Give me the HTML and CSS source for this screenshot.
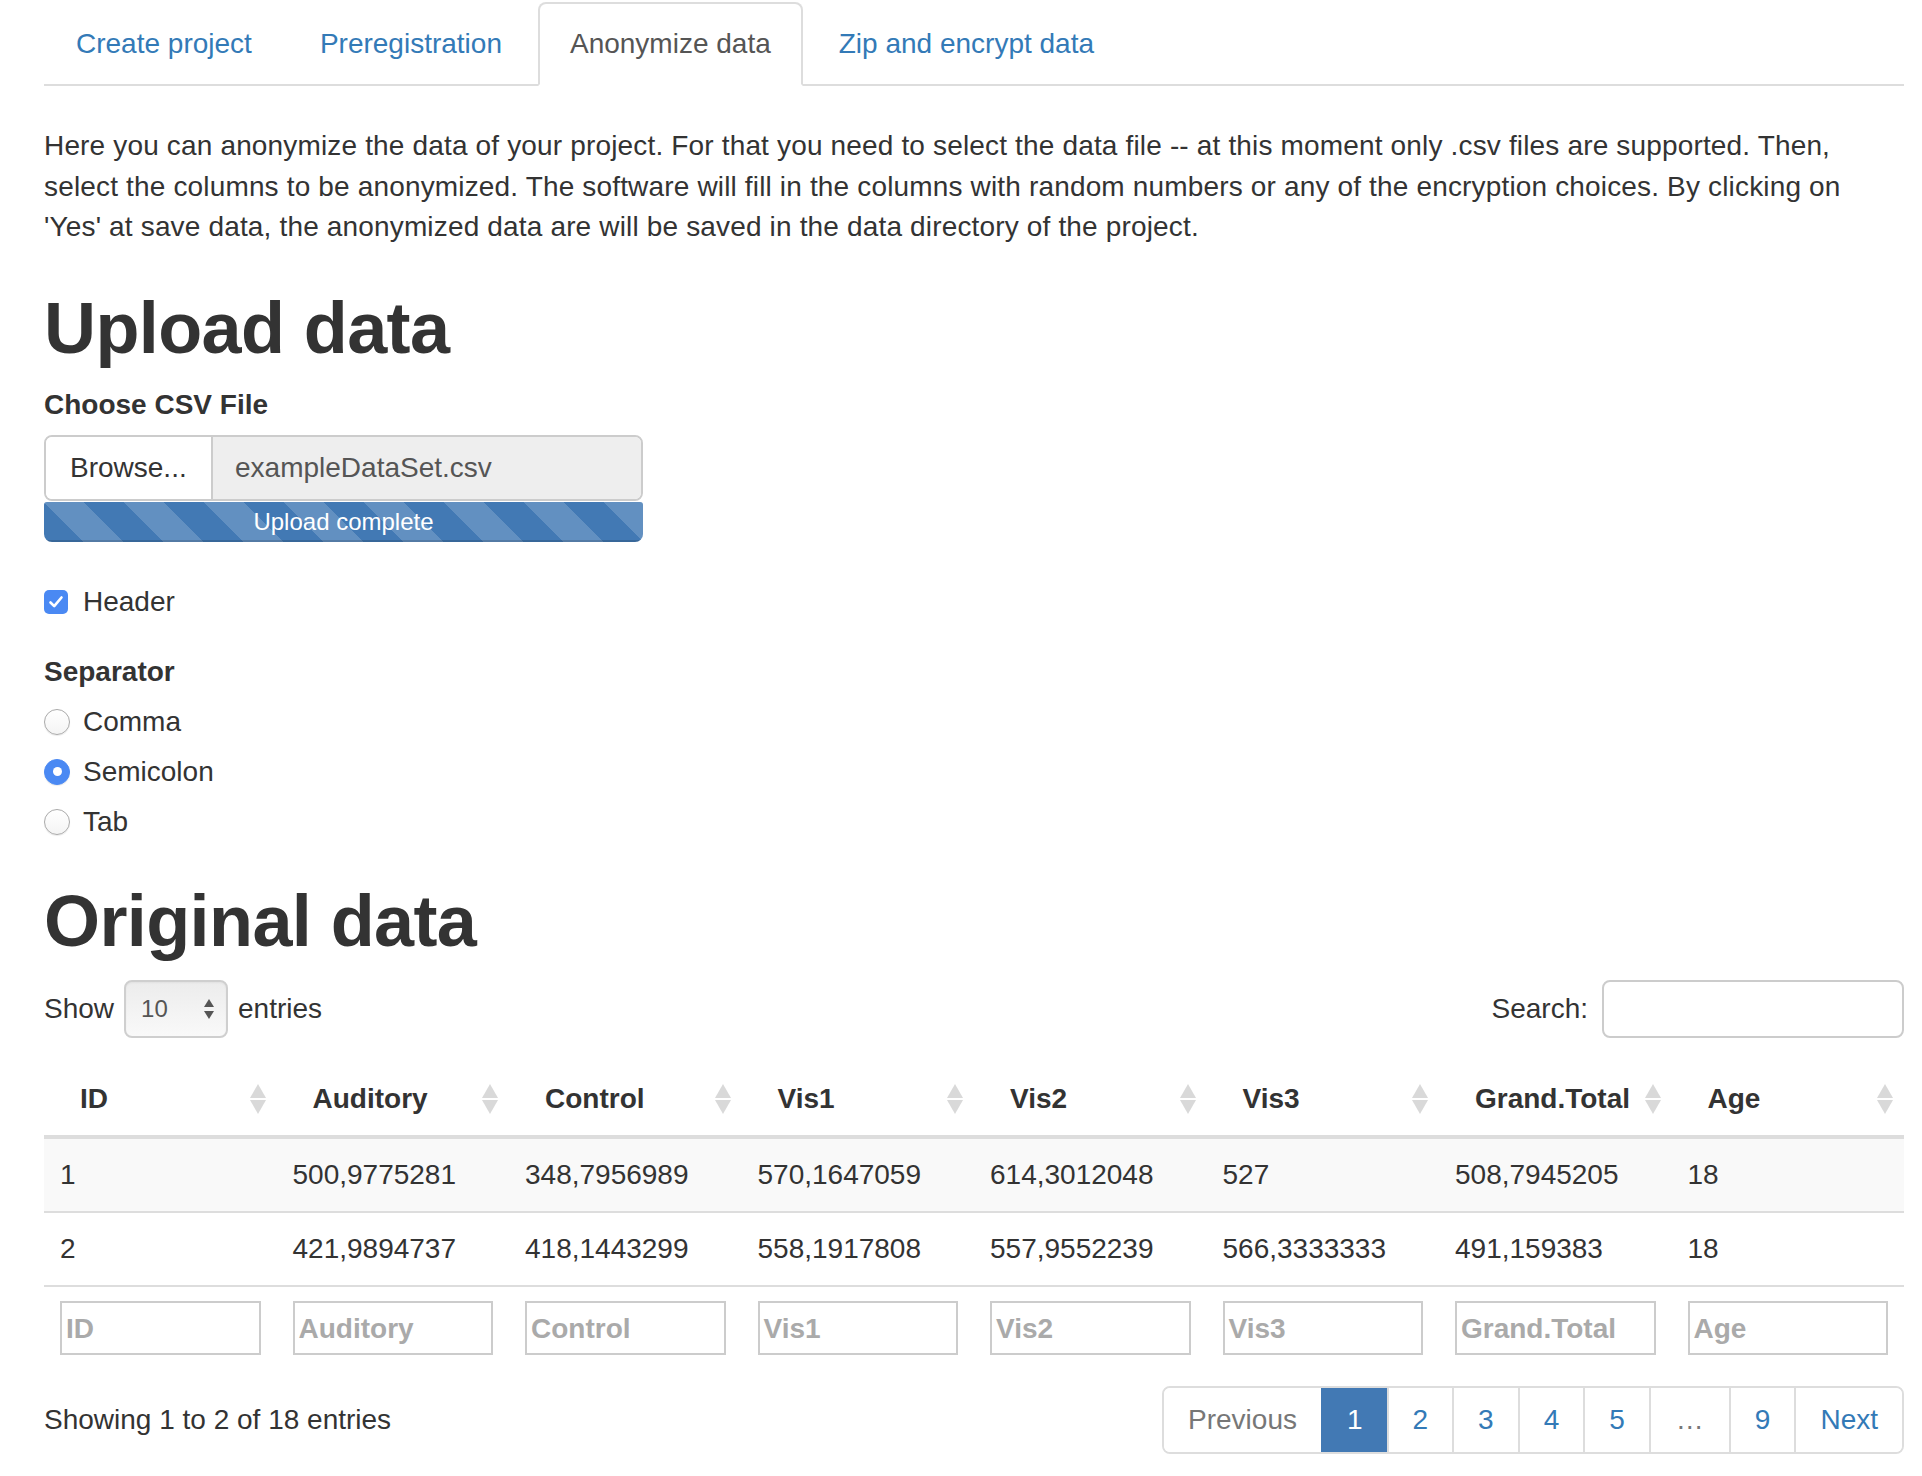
FILE: index.html
```html
<!DOCTYPE html>
<html lang="en">
<head>
<meta charset="utf-8">
<title>Anonymize data</title>
<link rel="stylesheet" href="styles.css">
</head>
<body>
<div class="page">
  <ul class="tabs">
    <li class="tab"><a>Create project</a></li>
    <li class="tab"><a>Preregistration</a></li>
    <li class="tab active"><a>Anonymize data</a></li>
    <li class="tab"><a>Zip and encrypt data</a></li>
  </ul>

  <p class="intro">Here you can anonymize the data of your project. For that you need to select the data file -- at this moment only .csv files are supported. Then, select the columns to be anonymized. The software will fill in the columns with random numbers or any of the encryption choices. By clicking on 'Yes' at save data, the anonymized data are will be saved in the data directory of the project.</p>

  <h1 class="heading">Upload data</h1>

  <div class="file-field">
    <div class="field-label">Choose CSV File</div>
    <div class="file-group">
      <span class="browse">Browse...</span>
      <span class="fname">exampleDataSet.csv</span>
    </div>
    <div class="progress"><div class="progress-bar">Upload complete</div></div>
  </div>

  <div class="check-row">
    <span class="checkbox">
      <svg width="24" height="24" viewBox="0 0 24 24"><path d="M6.5 12.5 L10.2 16.2 L17.5 7.5" fill="none" stroke="#fff" stroke-width="2.6" stroke-linecap="round" stroke-linejoin="round"/></svg>
    </span>
    <span>Header</span>
  </div>

  <div class="radio-group">
    <div class="field-label">Separator</div>
    <div class="radio-row"><span class="radio"></span><span>Comma</span></div>
    <div class="radio-row"><span class="radio checked"></span><span>Semicolon</span></div>
    <div class="radio-row"><span class="radio"></span><span>Tab</span></div>
  </div>

  <h1 class="heading heading-2">Original data</h1>

  <div class="dt-top">
    <div class="dt-length">
      <span>Show</span>
      <span class="select">
        <span>10</span>
        <svg width="12" height="26" viewBox="0 0 12 26"><path d="M6 3 L11 11 L1 11 Z" fill="#555"/><path d="M6 23 L11 15 L1 15 Z" fill="#555"/></svg>
      </span>
      <span>entries</span>
    </div>
    <div class="dt-search">
      <span>Search:</span>
      <span class="search-input"></span>
    </div>
  </div>

  <table class="data">
    <thead>
      <tr>
        <th>ID<svg class="sort" width="18" height="30" viewBox="0 0 18 30"><path d="M9 0 L17 14 L1 14 Z" fill="#d9d9d9"/><path d="M9 30 L17 16 L1 16 Z" fill="#d9d9d9"/></svg></th>
        <th>Auditory<svg class="sort" width="18" height="30" viewBox="0 0 18 30"><path d="M9 0 L17 14 L1 14 Z" fill="#d9d9d9"/><path d="M9 30 L17 16 L1 16 Z" fill="#d9d9d9"/></svg></th>
        <th>Control<svg class="sort" width="18" height="30" viewBox="0 0 18 30"><path d="M9 0 L17 14 L1 14 Z" fill="#d9d9d9"/><path d="M9 30 L17 16 L1 16 Z" fill="#d9d9d9"/></svg></th>
        <th>Vis1<svg class="sort" width="18" height="30" viewBox="0 0 18 30"><path d="M9 0 L17 14 L1 14 Z" fill="#d9d9d9"/><path d="M9 30 L17 16 L1 16 Z" fill="#d9d9d9"/></svg></th>
        <th>Vis2<svg class="sort" width="18" height="30" viewBox="0 0 18 30"><path d="M9 0 L17 14 L1 14 Z" fill="#d9d9d9"/><path d="M9 30 L17 16 L1 16 Z" fill="#d9d9d9"/></svg></th>
        <th>Vis3<svg class="sort" width="18" height="30" viewBox="0 0 18 30"><path d="M9 0 L17 14 L1 14 Z" fill="#d9d9d9"/><path d="M9 30 L17 16 L1 16 Z" fill="#d9d9d9"/></svg></th>
        <th>Grand.Total<svg class="sort" width="18" height="30" viewBox="0 0 18 30"><path d="M9 0 L17 14 L1 14 Z" fill="#d9d9d9"/><path d="M9 30 L17 16 L1 16 Z" fill="#d9d9d9"/></svg></th>
        <th>Age<svg class="sort" width="18" height="30" viewBox="0 0 18 30"><path d="M9 0 L17 14 L1 14 Z" fill="#d9d9d9"/><path d="M9 30 L17 16 L1 16 Z" fill="#d9d9d9"/></svg></th>
      </tr>
    </thead>
    <tbody>
      <tr class="odd">
        <td>1</td><td>500,9775281</td><td>348,7956989</td><td>570,1647059</td><td>614,3012048</td><td>527</td><td>508,7945205</td><td>18</td>
      </tr>
      <tr>
        <td>2</td><td>421,9894737</td><td>418,1443299</td><td>558,1917808</td><td>557,9552239</td><td>566,3333333</td><td>491,159383</td><td>18</td>
      </tr>
    </tbody>
    <tfoot>
      <tr>
        <td><span class="filter">ID</span></td>
        <td><span class="filter">Auditory</span></td>
        <td><span class="filter">Control</span></td>
        <td><span class="filter">Vis1</span></td>
        <td><span class="filter">Vis2</span></td>
        <td><span class="filter">Vis3</span></td>
        <td><span class="filter">Grand.Total</span></td>
        <td><span class="filter">Age</span></td>
      </tr>
    </tfoot>
  </table>

  <div class="dt-bottom">
    <div class="dt-info">Showing 1 to 2 of 18 entries</div>
    <div class="pagination">
      <span class="pg disabled">Previous</span>
      <span class="pg active">1</span>
      <span class="pg">2</span>
      <span class="pg">3</span>
      <span class="pg">4</span>
      <span class="pg">5</span>
      <span class="pg disabled ell">…</span>
      <span class="pg">9</span>
      <span class="pg">Next</span>
    </div>
  </div>
</div>
</body>
</html>
```

FILE: styles.css
```css
* { box-sizing: border-box; }

html, body {
  margin: 0;
  padding: 0;
  background: #fff;
}

body {
  font-family: "Liberation Sans", Arial, Helvetica, sans-serif;
  font-size: 28px;
  line-height: 40px;
  color: #333;
}

.page {
  padding: 2px 18px 0 44px;
}

/* Tabs */
.tabs {
  list-style: none;
  margin: 0;
  padding: 0;
  display: flex;
  border-bottom: 2px solid #ddd;
}
.tab {
  margin-right: 4px;
  margin-bottom: -2px;
}
.tab a {
  display: block;
  padding: 20px 30px;
  line-height: 40px;
  border: 2px solid transparent;
  border-radius: 8px 8px 0 0;
  color: #337ab7;
}
.tab.active a {
  color: #555;
  background: #fff;
  border-color: #ddd;
  border-bottom-color: transparent;
}

/* Intro */
.intro {
  margin: 40px 0 0;
  max-width: 1830px;
  line-height: 40.5px;
  letter-spacing: 0.16px;
}

.heading {
  font-size: 72px;
  line-height: 79px;
  font-weight: bold;
  margin: 41px 0 17px;
  letter-spacing: -0.6px;
}
.heading-2 {
  margin: 40px 0 0;
}

.field-label {
  font-weight: bold;
  line-height: 40px;
}

/* File input */
.file-field .field-label {
  margin-bottom: 10px;
}
.file-group {
  display: flex;
  width: 599px;
  height: 66px;
  border: 2px solid #ccc;
  border-radius: 8px;
  overflow: hidden;
}
.browse {
  display: flex;
  align-items: center;
  width: 167px;
  padding-left: 24px;
  background: #fff;
  color: #333;
  border-right: 2px solid #ccc;
}
.fname {
  display: flex;
  align-items: center;
  flex: 1;
  padding-left: 22px;
  background: #eee;
  color: #555;
}
.progress {
  width: 599px;
  height: 40px;
  margin-top: 1px;
  border-radius: 3px 3px 8px 8px;
  overflow: hidden;
  background: #f5f5f5;
}
.progress-bar {
  height: 100%;
  background-color: #4279b4;
  background-image: linear-gradient(45deg, rgba(255,255,255,.17) 25%, transparent 25%, transparent 50%, rgba(255,255,255,.17) 50%, rgba(255,255,255,.17) 75%, transparent 75%, transparent);
  background-size: 80px 80px;
  color: #fff;
  font-size: 24px;
  line-height: 40px;
  text-align: center;
  box-shadow: inset 0 -2px 0 rgba(0,0,0,.15);
}

/* Checkbox */
.check-row {
  display: flex;
  align-items: center;
  margin-top: 40px;
  height: 40px;
}
.checkbox {
  width: 24px;
  height: 24px;
  border-radius: 5px;
  background: #4a89f3;
  margin-right: 15px;
  display: flex;
}

/* Radios */
.radio-group {
  margin-top: 30px;
}
.radio-group .field-label {
  margin-bottom: 10px;
}
.radio-row {
  display: flex;
  align-items: center;
  height: 40px;
  margin-bottom: 10px;
}
.radio {
  width: 26px;
  height: 26px;
  border-radius: 50%;
  border: 1.5px solid #aaa;
  background: linear-gradient(#fff, #f4f4f4);
  margin-right: 13px;
  position: relative;
  box-shadow: 0 1px 1px rgba(0,0,0,.08);
}
.radio.checked {
  border-color: #4a89f3;
  background: #4a89f3;
}
.radio.checked::after {
  content: "";
  position: absolute;
  left: 50%;
  top: 50%;
  width: 9px;
  height: 9px;
  margin: -4.5px 0 0 -4.5px;
  border-radius: 50%;
  background: #fff;
}

/* DataTable top */
.dt-top {
  display: flex;
  justify-content: space-between;
  align-items: center;
  margin-top: 19px;
}
.dt-length, .dt-search {
  display: flex;
  align-items: center;
}
.select {
  display: flex;
  align-items: center;
  justify-content: space-between;
  width: 104px;
  height: 58px;
  margin: 0 10px;
  padding: 0 11px 0 15px;
  border: 2px solid #cfcfcf;
  border-radius: 8px;
  background: linear-gradient(#ececec, #f9f9f9);
  font-size: 24px;
  color: #555;
  box-shadow: inset 0 1px 2px rgba(0,0,0,.05);
}
.search-input {
  display: block;
  width: 302px;
  height: 58px;
  margin-left: 14px;
  border: 2px solid #ccc;
  border-radius: 8px;
  background: #fff;
}

/* Table */
.data {
  width: 100%;
  table-layout: fixed;
  border-collapse: collapse;
  margin-top: 21px;
}
.data th {
  position: relative;
  text-align: left;
  font-weight: bold;
  padding: 20px 36px 16px;
  line-height: 40px;
  border-bottom: 4px solid #ddd;
  white-space: nowrap;
}
.sort {
  position: absolute;
  right: 10px;
  top: 25px;
}
.data tbody td {
  padding: 16px;
  line-height: 40px;
  border-bottom: 2px solid #ddd;
  white-space: nowrap;
}
.data tbody tr.odd td {
  background: #f9f9f9;
}
.data tfoot td {
  padding: 14px 16px 14px 16px;
}
.filter {
  display: block;
  height: 54px;
  border: 2px solid #ccc;
  padding: 0 4px;
  font-weight: bold;
  color: #aaa;
  line-height: 52px;
}

/* Bottom */
.dt-bottom {
  display: flex;
  justify-content: space-between;
  align-items: center;
  margin-top: 17px;
}
.pagination {
  display: flex;
  border: 2px solid #ddd;
  border-radius: 8px;
  overflow: hidden;
}
.pg {
  display: block;
  padding: 12px 24px;
  line-height: 40px;
  min-width: 64px;
  text-align: center;
  color: #337ab7;
  border-left: 2px solid #ddd;
  background: #fff;
}
.pg:first-child {
  border-left: 0;
}
.pg.disabled {
  color: #777;
}
.pg.ell {
  min-width: 80px;
}
.pg.active {
  background: #4279b4;
  border-color: #4279b4;
  color: #fff;
}
```
